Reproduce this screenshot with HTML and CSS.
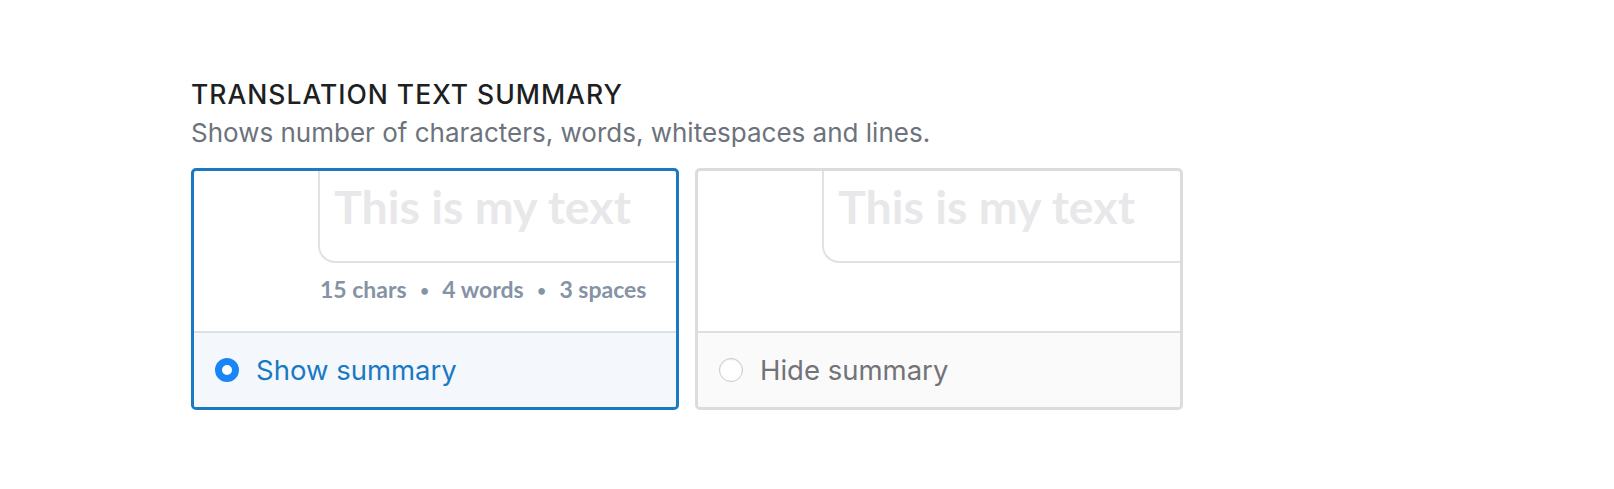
FILE: index.html
```html
<!DOCTYPE html>
<html>
<head>
<meta charset="utf-8">
<link rel="stylesheet" href="styles.css">
</head>
<body>
<section class="setting">
  <h2 class="title">TRANSLATION TEXT SUMMARY</h2>
  <p class="desc">Shows number of characters, words, whitespaces and lines.</p>
  <div class="options">
    <div class="card selected">
      <div class="preview">
        <div class="textbox">This is my text</div>
        <div class="stats">15 chars<span class="dot">•</span>4 words<span class="dot">•</span>3 spaces</div>
      </div>
      <div class="choice">
        <span class="radio"></span>
        <span class="label">Show summary</span>
      </div>
    </div>
    <div class="card">
      <div class="preview">
        <div class="textbox">This is my text</div>
      </div>
      <div class="choice">
        <span class="radio"></span>
        <span class="label">Hide summary</span>
      </div>
    </div>
  </div>
</section>
</body>
</html>
```
FILE: styles.css
```css
html, body {
  margin: 0;
  padding: 0;
  background: #ffffff;
}

body {
  font-family: Inter, "Liberation Sans", sans-serif;
}

.setting {
  padding: 80px 0 0 191px;
}

.title {
  margin: 0;
  font-size: 26.5px;
  font-weight: 500;
  line-height: 28px;
  letter-spacing: 1px;
  color: #1d1f23;
}

.desc {
  margin: 11px 0 0;
  font-size: 26px;
  font-weight: 400;
  line-height: 28px;
  color: #6c737c;
}

.options {
  display: flex;
  gap: 16px;
  margin-top: 21px;
}

.card {
  width: 482px;
  height: 236px;
  border: 3px solid #dcdcdc;
  border-radius: 5px;
  display: flex;
  flex-direction: column;
  overflow: hidden;
  background: #ffffff;
}

.card.selected {
  border-color: #1a79c3;
}

.preview {
  height: 160px;
  overflow: hidden;
}

.textbox {
  margin-left: 124px;
  height: 78px;
  padding: 12px 0 0 14px;
  border: 2px solid #e1e1e1;
  border-top: none;
  border-right: none;
  border-bottom-left-radius: 17px;
  font-family: Lato, "Open Sans", sans-serif;
  font-weight: 700;
  font-size: 46.5px;
  line-height: 46px;
  color: #e8e8ea;
  white-space: nowrap;
}

.stats {
  margin: 13px 0 0 126px;
  font-family: Lato, "Open Sans", sans-serif;
  font-weight: 700;
  font-size: 23px;
  line-height: 26px;
  color: #8593a5;
  white-space: nowrap;
}

.dot {
  display: inline-block;
  margin: 0 13.5px;
  font-size: 15px;
  vertical-align: 2px;
}

.choice {
  flex: 1;
  border-top: 2px solid #dcdfe3;
  background: #fafafa;
  display: flex;
  align-items: center;
  gap: 17px;
  padding-left: 21px;
}

.card.selected .choice {
  background: #f4f8fc;
}

.radio {
  box-sizing: border-box;
  width: 24px;
  height: 24px;
  border-radius: 50%;
  border: 1px solid #c8c8c8;
  background: #ffffff;
  box-shadow: inset 0 1px 1px rgba(0, 0, 0, 0.06);
}

.card.selected .radio {
  border: 7px solid #1a86f5;
  background: #ffffff;
  box-shadow: none;
}

.label {
  font-size: 27.5px;
  line-height: 30px;
  color: #727378;
}

.card.selected .label {
  color: #1a79c3;
}
```
